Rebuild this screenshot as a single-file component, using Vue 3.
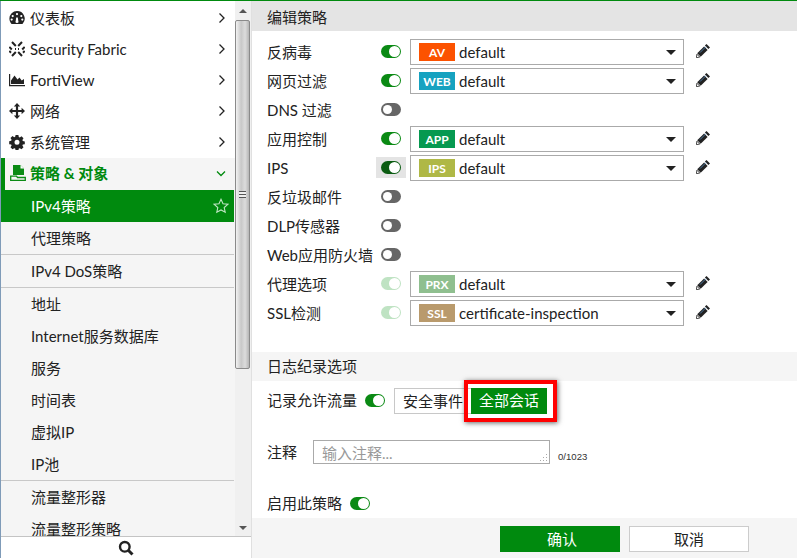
<script setup>
const topNav = [
  { label: '仪表板', icon: 'gauge' },
  { label: 'Security Fabric', icon: 'fabric' },
  { label: 'FortiView', icon: 'chart' },
  { label: '网络', icon: 'move' },
  { label: '系统管理', icon: 'cog' }
]
const subGroups = [
  ['代理策略'],
  ['IPv4 DoS策略'],
  ['地址', 'Internet服务数据库', '服务', '时间表', '虚拟IP', 'IP池'],
  ['流量整形器', '流量整形策略']
]
const rows = [
  { label: '反病毒', on: true, tag: 'AV', color: '#fc5200', value: 'default' },
  { label: '网页过滤', on: true, tag: 'WEB', color: '#16a2c0', value: 'default' },
  { label: 'DNS 过滤', on: false },
  { label: '应用控制', on: true, tag: 'APP', color: '#069950', value: 'default' },
  { label: 'IPS', on: true, hover: true, tag: 'IPS', color: '#afb846', value: 'default' },
  { label: '反垃圾邮件', on: false },
  { label: 'DLP传感器', on: false },
  { label: 'Web应用防火墙', on: false },
  { label: '代理选项', on: true, faded: true, tag: 'PRX', color: '#8fbf8f', value: 'default' },
  { label: 'SSL检测', on: true, faded: true, tag: 'SSL', color: '#b99a6c', value: 'certificate-inspection' }
]
</script>

<template>
  <div class="app">
    <aside class="side">
      <div class="side-top">
        <nav class="nav">
          <a v-for="item in topNav" :key="item.label" class="nav-item">
            <svg class="ico" viewBox="0 0 16 16">
              <template v-if="item.icon === 'gauge'">
                <path fill="#222" fill-rule="evenodd" d="M8 1a7.600 7.600 0 0 0-7.600 7.600c0 2 .7 3.800 1.900 5.100.3.300.6.400 1 .4h9.400c.4 0 .7-.1 1-.4A7.600 7.600 0 0 0 8 1ZM8 3a1.100 1.100 0 1 1 0 2.200A1.100 1.100 0 0 1 8 3ZM3.700 5a1.100 1.100 0 1 1 0 2.200 1.100 1.100 0 0 1 0-2.200ZM12.300 5a1.100 1.100 0 1 1 0 2.200 1.100 1.100 0 0 1 0-2.200ZM2.700 8.500a1.100 1.100 0 1 1 0 2.200 1.100 1.100 0 0 1 0-2.200ZM13.300 8.500a1.100 1.100 0 1 1 0 2.200 1.100 1.100 0 0 1 0-2.200ZM7.200 7.500h1.600l.5 3.600a1.400 1.400 0 1 1-2.600 0Z"/>
              </template>
              <template v-else-if="item.icon === 'fabric'">
                <g fill="none" stroke="#222" stroke-width="2">
                  <path d="M3 1 6.800 5M13 1 9.200 5M3 15 6.800 11M13 15 9.200 11"/>
                  <path d="M.3 6 2.800 8.500M15.700 6 13.200 8.500M.3 10 2 11.700M15.700 10 14 11.700"/>
                  <path d="M6 8h1M9 8h1"/>
                </g>
              </template>
              <template v-else-if="item.icon === 'chart'">
                <path fill="#222" d="M0 2h1.200v11H16v1.200H0Z"/>
                <path fill="#222" d="M2 12V8.500L5.500 3.500l3 4 2-2 2.200 3L15 7v5Z"/>
              </template>
              <template v-else-if="item.icon === 'move'">
                <path fill="#222" d="M8 0l3.200 3.400H9.100v3.500h3.500V4.800L16 8l-3.400 3.200V9.100H9.100v3.500h2.100L8 16l-3.200-3.400h2.100V9.100H3.400v2.100L0 8l3.400-3.200v2.100h3.500V3.400H4.800Z"/>
              </template>
              <template v-else>
                <path fill="#222" fill-rule="evenodd" d="M6.600 1h2.800l.4 2 1 .4 1.700-1.100 2 2-1.100 1.700.4 1 2 .4v2.800l-2 .4-.4 1 1.100 1.700-2 2-1.700-1.100-1 .4-.4 2H6.600l-.4-2-1-.4-1.700 1.100-2-2 1.100-1.700-.4-1-2-.4V7.200l2-.4.4-1L1.500 4.100l2-2 1.700 1.100 1-.4ZM8 5.800a2.500 2.500 0 1 0 0 5 2.500 2.500 0 0 0 0-5Z"/>
              </template>
            </svg>
            <span class="nav-label">{{ item.label }}</span>
            <svg class="chev" viewBox="0 0 8 12"><path d="M1.500 1.500 6 6l-4.500 4.500" fill="none" stroke="#222" stroke-width="1.300"/></svg>
          </a>
          <a class="nav-item open">
            <svg class="ico" viewBox="0 0 16 16">
              <path fill="#0a8a14" d="M3 0h7.500L14 3.500V10H3Z"/>
              <path fill="#fff" d="M10.500 0v3.500H14Z"/>
              <path fill="none" stroke="#0a8a14" stroke-width="1.300" d="M.7 15.300V11.200h5.800l1 1.300h7.800v2.800Z"/>
            </svg>
            <span class="nav-label">策略 &amp; 对象</span>
            <svg class="chev down" viewBox="0 0 10 7"><path d="M1 1.500 5 5.500l4-4" fill="none" stroke="#008a0e" stroke-width="1.300"/></svg>
          </a>
          <div class="sub">
            <a class="sub-item active">
              <span>IPv4策略</span>
              <svg class="star" viewBox="0 0 16 16"><path d="M8 1.300l2 4.500 4.800.5-3.600 3.200 1 4.800L8 12l-4.200 2.300 1-4.800L1.200 6.300 6 5.800Z" fill="none" stroke="#bfe6c4" stroke-width="1.100"/></svg>
            </a>
            <div v-for="(group, i) in subGroups" :key="i" class="group">
              <a v-for="label in group" :key="label" class="sub-item">{{ label }}</a>
            </div>
          </div>
        </nav>
        <div class="scrollbar">
          <div class="sb-btn"><i class="sb-up"></i></div>
          <div class="sb-thumb"><i class="grip"></i></div>
          <div class="sb-track"></div>
          <div class="sb-btn bottom"><i class="sb-down"></i></div>
        </div>
      </div>
      <div class="search">
        <svg viewBox="0 0 16 16" width="16" height="16"><circle cx="6.800" cy="6.800" r="4.800" fill="none" stroke="#222" stroke-width="2.400"/><path d="M10.500 10.500 14.500 14.500" stroke="#222" stroke-width="3"/></svg>
      </div>
    </aside>

    <main class="main">
      <div class="body">
        <h2 class="title">编辑策略</h2>
        <div class="rows">
          <div v-for="row in rows" :key="row.label" class="row">
            <span class="label">{{ row.label }}</span>
            <span class="tog-wrap" :class="{ hover: row.hover }">
              <span class="toggle" :class="{ on: row.on, faded: row.faded, dark: row.hover }"></span>
            </span>
            <template v-if="row.tag">
              <div class="select">
                <span class="tag" :style="{ background: row.color }">{{ row.tag }}</span>
                <span class="value">{{ row.value }}</span>
                <i class="caret"></i>
              </div>
              <svg class="pencil" viewBox="0 0 14 14">
                <path fill="#222" d="M10.500 0 14 3.500 12.400 5.100 8.900 1.600Z"/>
                <path fill="#222" d="M8.100 2.400 11.600 5.900 4.700 12.800 1.200 9.300Z"/>
                <path fill="#fff" stroke="#222" stroke-width=".8" d="M.9 10.200 3.800 13.100 .3 13.700Z"/>
                <path stroke="#5a9bd5" stroke-width=".7" d="M10 2.600 4 8.600"/>
              </svg>
            </template>
          </div>
        </div>

        <h2 class="title log">日志纪录选项</h2>
        <div class="traffic">
          <span class="traffic-label">记录允许流量</span>
          <span class="toggle on"></span>
          <div class="radio">
            <span class="radio-opt">安全事件</span>
            <span class="radio-opt selected">全部会话<i class="mark"></i></span>
          </div>
        </div>
        <div class="comment">
          <span class="comment-label">注释</span>
          <div class="textarea">
            <span>输入注释...</span>
            <svg class="resize" viewBox="0 0 8 8"><path fill="#aaa" d="M6 0h1v1H6ZM3 3h1v1H3ZM6 3h1v1H6ZM0 6h1v1H0ZM3 6h1v1H3ZM6 6h1v1H6Z"/></svg>
          </div>
          <span class="count">0/1023</span>
        </div>
        <div class="enable">
          <span>启用此策略</span>
          <span class="toggle on"></span>
        </div>
      </div>
      <footer class="footer">
        <button class="btn primary">确认</button>
        <button class="btn">取消</button>
      </footer>
    </main>
  </div>
</template>

<style>
html, body { margin: 0; overflow: hidden; background: #fff; }
</style>

<style scoped>
.app {
  width: 797px;
  height: 558px;
  box-sizing: border-box;
  display: flex;
  border-top: 1px solid #008a0e;
  font: 15px/20px Lato, "Noto Sans CJK SC", sans-serif;
  color: #222;
  overflow: hidden;
}
.side {
  width: 252px;
  flex: none;
  display: flex;
  flex-direction: column;
  box-sizing: border-box;
  border-left: 1px solid #7f9bb8;
  border-right: 1px solid #e0e0e0;
}
.side-top { flex: 1; min-height: 0; display: flex; border-bottom: 1px solid #c4c4c4; }
.nav { width: 234px; flex: none; overflow: hidden; padding-top: 1px; }
.nav-item { display: flex; align-items: center; height: 31px; padding-left: 8px; }
.ico { width: 16px; height: 16px; margin-right: 5px; flex: none; }
.nav-label { flex: 1; }
.chev { width: 8px; height: 12px; margin-right: 9px; }
.chev.down { width: 10px; height: 7px; margin-right: 9px; }
.open {
  box-sizing: border-box;
  height: 32px;
  margin-top: 1px;
  padding-bottom: 2px;
  color: #008a0e;
  font-weight: 700;
  background: #f5f5f5;
  border-left: 4px solid #008a0e;
  padding-left: 5px;
}
.open .ico { margin-right: 4px; }
.sub { background: #f5f5f5; }
.sub-item { display: flex; align-items: center; height: 32px; padding-left: 30px; }
.active {
  background: #008a0e;
  color: #fff;
  justify-content: space-between;
  padding-right: 5px;
  margin-right: 1px;
}
.star { width: 16px; height: 16px; }
.group { border-top: 1px solid #c8c8c8; margin-right: 1px; }
.group:first-of-type { border-top: 0; }
.group:first-of-type + .group { border-top: 1px solid #c8c8c8; }
.scrollbar { flex: 1; display: flex; flex-direction: column; background: #f0f0f0; }
.sb-btn { height: 19px; flex: none; display: flex; align-items: center; justify-content: center; background: #f0f0f0; }
.sb-btn.bottom { height: 16px; }
.sb-up { border: 4px solid transparent; border-top: 0; border-bottom: 4px solid #555; }
.sb-down { border: 4px solid transparent; border-bottom: 0; border-top: 4px solid #555; }
.sb-thumb {
  height: 349px;
  flex: none;
  box-sizing: border-box;
  border: 1px solid #8a8a8a;
  border-radius: 2px;
  background: linear-gradient(90deg, #f2f2f2, #c8c8c8 40%, #dcdcdc 70%, #b5b5b5);
  margin-right: 1px;
  display: flex;
  align-items: center;
  justify-content: center;
}
.grip {
  width: 7px;
  height: 7px;
  background: repeating-linear-gradient(180deg, #555 0 1px, #eee 1px 3px);
}
.sb-track { flex: 1; }
.search { height: 21px; flex: none; display: flex; align-items: center; justify-content: center; background: #fff; }

.main { flex: 1; display: flex; flex-direction: column; min-width: 0; }
.body { flex: 1; min-height: 0; }
.title {
  margin: 0;
  height: 30px;
  line-height: 32px;
  padding-left: 15px;
  font-size: 15px;
  font-weight: 400;
  background: #e4e4e4;
}
.title.log { height: 29px; line-height: 29px; background: #f5f5f5; margin-top: 25px; }
.rows { padding: 6px 15px 0; }
.row { display: flex; align-items: center; height: 29px; }
.label { width: 114px; flex: none; }
.tog-wrap { width: 30px; height: 21px; margin-left: -5px; margin-right: 4px; display: flex; align-items: center; justify-content: center; flex: none; }
.tog-wrap.hover { background: #e4e4e4; }
.toggle {
  display: block;
  position: relative;
  flex: none;
  width: 20px;
  height: 13px;
  border-radius: 7px;
  background: #666;
}
.toggle::after {
  content: "";
  position: absolute;
  left: 2px;
  top: 2px;
  width: 9px;
  height: 9px;
  border-radius: 50%;
  background: #fff;
}
.toggle.on { background: #0b8a14; }
.toggle.on::after { left: 8px; top: 1px; width: 11px; height: 11px; }
.toggle.dark { background: #0b5c12; }
.toggle.faded { background: #bfe3c3; }
.select {
  position: relative;
  box-sizing: border-box;
  width: 274px;
  height: 26px;
  flex: none;
  display: flex;
  align-items: center;
  border: 1px solid #aaa;
  padding-left: 8px;
}
.tag {
  width: 36px;
  height: 18px;
  line-height: 19px;
  text-align: center;
  color: #fff;
  font-size: 12px;
  font-weight: 700;
  margin-right: 4px;
}
.caret {
  position: absolute;
  right: 7px;
  top: 10px;
  border: 5px solid transparent;
  border-bottom: 0;
  border-top: 5px solid #222;
}
.pencil { width: 14px; height: 14px; margin-left: 12px; margin-bottom: 2px; flex: none; }
.traffic { display: flex; align-items: center; padding: 7px 0 0 15px; height: 26px; }
.traffic-label { padding-bottom: 2px; }
.traffic > .toggle { margin-left: 8px; margin-bottom: 1px; }
.radio { display: flex; margin-left: 9px; height: 26px; }
.radio-opt {
  box-sizing: border-box;
  height: 26px;
  line-height: 24px;
  border: 1px solid #c8c8c8;
  border-right: 0;
  padding: 0 7px 0 8px;
  width: 77px;
}
.selected {
  position: relative;
  background: #008a0e;
  border: 0;
  color: #fff;
  width: 76px;
  text-align: center;
  padding: 0;
}
.mark {
  position: absolute;
  left: -7px;
  right: -10px;
  top: -8px;
  bottom: -8px;
  border: 4px solid #f00;
  box-shadow: 1px 1px 5px rgba(0, 0, 0, .6);
  pointer-events: none;
}
.comment { display: flex; align-items: flex-start; padding: 26px 0 0 15px; }
.comment-label { width: 46px; line-height: 24px; height: 26px; }
.textarea {
  position: relative;
  box-sizing: border-box;
  width: 237px;
  height: 24px;
  border: 1px solid #aaa;
  padding-left: 8px;
  line-height: 24px;
  color: #999;
}
.resize { position: absolute; right: 1px; bottom: 1px; width: 8px; height: 8px; }
.count { font: 9.6px/12px "Liberation Sans", sans-serif; margin: 11px 0 0 8px; color: #333; }
.enable { display: flex; align-items: center; gap: 8px; padding: 27px 0 0 15px; height: 20px; }
.footer {
  height: 40px;
  flex: none;
  box-sizing: border-box;
  background: #f5f5f5;
  display: flex;
  padding: 8px 0 6px 248px;
  gap: 9px;
}
.btn {
  width: 120px;
  height: 26px;
  box-sizing: border-box;
  border: 1px solid #ccc;
  background: #fff;
  color: #222;
  font: inherit;
  padding: 0;
}
.btn.primary { background: #008a0e; border-color: #008a0e; color: #fff; padding-left: 4px; }
</style>
